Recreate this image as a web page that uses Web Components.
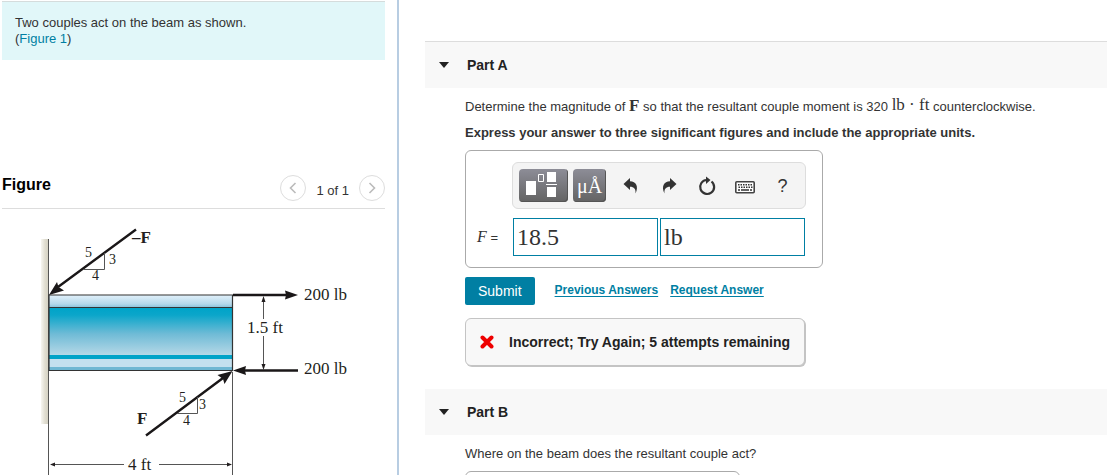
<!DOCTYPE html>
<html lang="en">
<head>
<meta charset="utf-8">
<title>Couples on a beam</title>
<style>
    body {
        margin: 0;
        height: 100vh;
        overflow: hidden;
        font-family: "Liberation Sans", Arial, sans-serif;
        font-size: 13px;
        line-height: 16px;
        color: #333;
        background: #fff;
    }

    /* no line height of its own, so formulas do not push lines apart */
    .math {
        font-family: "Liberation Serif", "Times New Roman", serif;
        font-size: 17px;
        line-height: 0;
    }

    .raised {
        vertical-align: 1px;
    }

    a {
        color: #007fa3;
        text-decoration: none;
    }

    p {
        margin: 0;
    }
</style>
</head>
<body>
<exercise-page>
    <problem-intro slot="side">
        Two couples act on the beam as shown.<br>(<a href="#figure">Figure 1</a>)
    </problem-intro>
    <figure-viewer slot="side" id="figure" label="Figure" position="1 of 1">
        <beam-figure></beam-figure>
    </figure-viewer>

    <exercise-part label="Part A" first>
        <p>Determine the magnitude of <b class="math">F</b> so that the resultant couple moment is 320 <span class="math raised">lb · ft</span> counterclockwise.</p>
        <p><b>Express your answer to three significant figures and include the appropriate units.</b></p>
        <answer-editor symbol="F" value="18.5" unit="lb"></answer-editor>
        <answer-actions></answer-actions>
        <answer-feedback>Incorrect; Try Again; 5 attempts remaining</answer-feedback>
    </exercise-part>
    <exercise-part label="Part B">
        <p>Where on the beam does the resultant couple act?</p>
        <answer-frame></answer-frame>
    </exercise-part>
</exercise-page>

<script>
function define(name, html, setup) {
    const template = document.createElement('template');
    template.innerHTML = `<style>*, :host { box-sizing: border-box; }</style>${html}`;

    customElements.define(name, class extends HTMLElement {
        constructor() {
            super();
            this.attachShadow({ mode: 'open' }).appendChild(template.content.cloneNode(true));
        }

        connectedCallback() {
            if (setup) setup(this, selector => this.shadowRoot.querySelector(selector));
        }
    });
}

// two column page: the problem and its figure on the left, the parts on the right
define('exercise-page', `
    <style>
        :host {
            display: grid;
            grid-template-columns: 399px minmax(0, 1fr);
            height: 100vh;
            overflow: hidden;
        }

        aside {
            min-width: 0;
            padding: 1px 12px 0 2px;
            border-right: 2px solid #b8cde2;
            overflow: hidden;
        }

        main {
            min-width: 0;
            padding: 41px 0 0 26px;
            overflow: hidden;
        }
    </style>
    <aside><slot name="side"></slot></aside>
    <main><slot></slot></main>
`);

define('problem-intro', `
    <style>
        :host {
            display: block;
            padding: 13px;
            border-top: 1px solid #d5dcdc;
            background: #e1f7f9;
        }
    </style>
    <slot></slot>
`);

define('figure-viewer', `
    <style>
        :host {
            display: block;
            margin-top: 115px;
        }

        header {
            display: flex;
            justify-content: space-between;
            padding-bottom: 7px;
            border-bottom: 1px solid #ddd;
        }

        h2 {
            margin: 0;
            font-size: 16px;
            line-height: 20px;
            color: #000;
        }

        nav {
            display: flex;
            align-items: center;
            gap: 10px;
        }

        nav span {
            padding-top: 5px;
        }

        button {
            display: flex;
            align-items: center;
            justify-content: center;
            width: 26px;
            height: 26px;
            padding: 0;
            border: 1px solid #ddd;
            border-radius: 50%;
            background: #fff;
        }

        svg {
            fill: none;
            stroke: #bbb;
            stroke-width: 1.6;
        }
    </style>
    <header>
        <h2></h2>
        <nav>
            <button aria-label="Previous figure"><svg width="12" height="12"><path d="M8.5 1 3.5 6l5 5"/></svg></button>
            <span></span>
            <button aria-label="Next figure"><svg width="12" height="12"><path d="M3.5 1l5 5-5 5"/></svg></button>
        </nav>
    </header>
    <slot></slot>
`, (host, $) => {
    $('h2').textContent = host.getAttribute('label');
    $('nav span').textContent = host.getAttribute('position');
});

define('beam-figure', `
    <style>
        :host {
            display: block;
        }

        svg {
            display: block;
            max-width: 100%;
            font-family: "Liberation Serif", "Times New Roman", serif;
            font-size: 17px;
            fill: #231f20;
        }

        .small { font-size: 14px; }
        .bold { font-weight: bold; }
        .thin { fill: none; stroke: #555; stroke-width: 1; }
        .force { fill: none; stroke: #1a1718; stroke-width: 2.4; }
    </style>
    <svg width="383" height="280" viewBox="2 209 383 280" role="img" aria-label="Beam with two couples">
        <defs>
            <linearGradient id="wall"><stop offset="0" stop-color="#f7f6f1"/><stop offset=".5" stop-color="#e0ddd0"/><stop offset="1" stop-color="#d2cfc0"/></linearGradient>
            <linearGradient id="flange" x2="0" y2="1"><stop offset="0" stop-color="#e2f1fb"/><stop offset=".75" stop-color="#b5d8ea"/><stop offset="1" stop-color="#8fc4dc"/></linearGradient>
            <linearGradient id="web" x2="0" y2="1"><stop offset="0" stop-color="#00a3c8"/><stop offset=".15" stop-color="#0ba6ca"/><stop offset=".55" stop-color="#6fbbd6"/><stop offset="1" stop-color="#b5d8e7"/></linearGradient>
        </defs>
        <path fill="url(#wall)" d="M41 239h8v185h-8z"/>
        <path class="thin" d="M48.5 239v236M232.5 372v103"/>

        <path fill="url(#flange)" d="M49 295h183v12H49z"/>
        <path fill="url(#web)" d="M49 308h183v47H49z"/>
        <path fill="#00a3c8" d="M49 355h183v4H49z"/>
        <path fill="#c4e0ef" d="M49 359h183v8H49z"/>
        <path fill="#70b7d3" d="M49 367h183v3H49z"/>
        <path fill="none" stroke="#333" stroke-width="1.2" d="M49 295h183.500v75.500H49zM49 307.500h183"/>

        <path class="force" d="M136 229.500 58 287M233 295h54M298 370.500H242M146 435.500 223 378"/>
        <path fill="#1a1718" d="M49 295l8-13 1.500 5 5.500 3.500zM298 295l-13-4.500 1 4.500-1 4.500zM233 370.500l13-4.500-1 4.500 1 4.500zM232.500 371l-8 13-1.500-5-5.500-4z"/>

        <path class="thin" d="M84 269.500h20.500V253M177 413.500h20.500V397"/>
        <path class="thin" d="M263.500 299v20M263.500 336v30M52 464.500h72M159 464.500h70"/>
        <path d="M263.500 296l-2 6h4zM263.500 370l-2-6h4zM50 464.500l5-2v4zM232 464.500l-5-2v4z"/>

        <text x="132" y="243" class="bold">–F</text>
        <text x="137" y="424" class="bold">F</text>
        <text x="85" y="257" class="small">5</text>
        <text x="109" y="264" class="small">3</text>
        <text x="92" y="280" class="small">4</text>
        <text x="179" y="402" class="small">5</text>
        <text x="199" y="409" class="small">3</text>
        <text x="183" y="425" class="small">4</text>
        <text x="304" y="300">200 lb</text>
        <text x="304" y="374">200 lb</text>
        <text x="247" y="333">1.5 ft</text>
        <text x="128" y="470">4 ft</text>
    </svg>
`);

define('exercise-part', `
    <style>
        :host {
            display: block;
            margin-bottom: 22px;
        }

        h3 {
            margin: 0;
            border-top: 1px solid transparent;
            background: #f8f8f8;
            background-clip: padding-box;
        }

        :host([first]) h3 {
            border-top-color: #ddd;
        }

        button {
            display: flex;
            align-items: center;
            gap: 18px;
            width: 100%;
            height: 46px;
            padding: 0 14px;
            border: 0;
            background: none;
            font: bold 14px/16px "Liberation Sans", Arial, sans-serif;
            color: #222;
        }

        section {
            display: flex;
            flex-direction: column;
            align-items: flex-start;
            gap: 9px;
            padding: 10px 0 0 40px;
            line-height: 17px;
        }
    </style>
    <h3>
        <button aria-expanded="true">
            <svg width="10" height="6" fill="#222"><path d="M0 0h10L5 6z"/></svg>
            <span></span>
        </button>
    </h3>
    <section><slot></slot></section>
`, (host, $) => {
    $('button span').textContent = host.getAttribute('label');
});

define('answer-editor', `
    <style>
        :host {
            display: block;
            padding: 11px 16px 11px 11px;
            border: 1px solid #aaa;
            border-radius: 6px;
        }

        form {
            display: grid;
            grid-template-columns: 35px 294px;
            row-gap: 9px;
            align-items: center;
        }

        .toolbar {
            grid-column: 2;
            display: flex;
            align-items: center;
            gap: 5px;
            height: 47px;
            padding: 0 6px;
            border: 1px solid #ddd;
            border-radius: 6px;
            background: #f4f4f4;
        }

        button {
            display: flex;
            align-items: center;
            justify-content: center;
            width: 33px;
            height: 33px;
            padding: 0;
            border: 0;
            background: none;
            color: #333;
            font: 18px/20px "Liberation Sans", Arial, sans-serif;
        }

        .key {
            border-radius: 4px;
            background: linear-gradient(#8d8d97, #636363);
            box-shadow: inset -1px -1px 0 #555;
            color: #fff;
            font: 20px/24px "Liberation Serif", "Times New Roman", serif;
        }

        .wide {
            width: 49px;
        }

        .tools {
            display: flex;
            gap: 5px;
            padding-left: 3px;
        }

        label {
            font-size: 13px;
        }

        label i {
            font-family: "Liberation Serif", "Times New Roman", serif;
            font-size: 16px;
        }

        .fields {
            display: flex;
            gap: 2px;
            padding: 0 1px;
        }

        input {
            flex: 1;
            min-width: 0;
            height: 38px;
            padding: 0 3px;
            border: 1px solid #007fa3;
            border-radius: 0;
            background: #fff;
            color: #333;
            font: 24px/28px "Liberation Serif", "Times New Roman", serif;
        }
    </style>
    <form>
        <div class="toolbar">
            <button type="button" class="key wide" aria-label="Templates">
                <svg width="49" height="33" fill="#fff"><path d="M7 12h10v14H7zM28 3h9v10h-9zM28 18h9v10h-9zM27 15h11v1H27z"/><path fill="none" stroke="#fff" d="M19.500 5.500h5v7h-5z"/></svg>
            </button>
            <button type="button" class="key">μÅ</button>
            <div class="tools">
                <button type="button" aria-label="Undo">
                    <svg width="16" height="16" fill="#333"><path d="M.5 6 7 0v3.200c6 .3 9 5 5.500 12.300C13 11 11 8.800 7 8.800V12z"/></svg>
                </button>
                <button type="button" aria-label="Redo">
                    <svg width="16" height="16" fill="#333"><path d="M15.500 6 9 0v3.200c-6 .3-9 5-5.500 12.300C3 11 5 8.800 9 8.800V12z"/></svg>
                </button>
                <button type="button" aria-label="Reset">
                    <svg width="18" height="20"><path fill="none" stroke="#333" stroke-width="2.200" d="M13.500 5.500A7 7 0 1 1 8.500 4"/><path fill="#333" d="M8 .5 12.500 4 8 8z"/></svg>
                </button>
                <button type="button" aria-label="Keyboard">
                    <svg width="20" height="16"><rect x=".8" y="3.800" width="18.400" height="11" rx="1" fill="#fff" stroke="#444" stroke-width="1.600"/><path fill="none" stroke="#333" stroke-width="1.500" d="M3 6.800h14M3.500 9.300h14" stroke-dasharray="1.500 1"/><path stroke="#333" stroke-width="1.500" d="M3 12h2M6 12h8M15 12h2"/></svg>
                </button>
                <button type="button" aria-label="Help">?</button>
            </div>
        </div>
        <label for="value"><i></i> =</label>
        <div class="fields">
            <input id="value" type="text">
            <input id="unit" type="text" aria-label="Units">
        </div>
    </form>
`, (host, $) => {
    $('label i').textContent = host.getAttribute('symbol');
    $('#value').value = host.getAttribute('value');
    $('#unit').value = host.getAttribute('unit');
});

define('answer-actions', `
    <style>
        :host {
            display: flex;
            gap: 12px;
            font-size: 12px;
            line-height: 26px;
        }

        button {
            height: 28px;
            margin-right: 8px;
            padding: 0 13px;
            border: 0;
            border-radius: 2px;
            background: #007fa3;
            color: #fff;
            font: 14px/16px "Liberation Sans", Arial, sans-serif;
        }

        a {
            color: #007fa3;
            font-weight: bold;
            text-underline-offset: 2px;
        }
    </style>
    <button type="button">Submit</button>
    <a href="#previous">Previous Answers</a>
    <a href="#request">Request Answer</a>
`);

define('answer-feedback', `
    <style>
        :host {
            display: flex;
            align-items: center;
            gap: 15px;
            height: 48px;
            margin-top: 4px;
            padding: 0 14px;
            border: 1px solid #c4c4c4;
            border-radius: 6px;
            background: #f8f8f8;
            box-shadow: 1px 1px 0 #c4c4c4;
            font-size: 14px;
            font-weight: bold;
            color: #222;
        }
    </style>
    <svg width="14" height="14"><path fill="none" stroke="#e00" stroke-width="4" stroke-linecap="round" d="M2.500 2.500l9 9M11.500 2.500l-9 9"/></svg>
    <span><slot></slot></span>
`);

define('answer-frame', `
    <style>
        :host {
            display: block;
            width: 275px;
            height: 60px;
            border: 1px solid #aaa;
            border-radius: 6px;
        }
    </style>
`);
</script>
</body>
</html>
